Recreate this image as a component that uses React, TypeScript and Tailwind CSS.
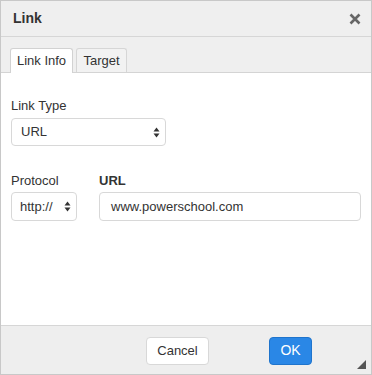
import React from "react";

function Arrows() {
  return (
    <svg width="7" height="11" viewBox="0 0 7 11" className="shrink-0">
      <path d="M3.5 0.5 L6.5 4.5 L0.5 4.5 Z" fill="#333" />
      <path d="M3.5 10.5 L6.5 6.5 L0.5 6.5 Z" fill="#333" />
    </svg>
  );
}

export default function App() {
  return (
    <div
      className="w-[372px] h-[375px] flex flex-col border border-[#c8c8c8] bg-white text-[#333]"
      style={{ fontFamily: '"Liberation Sans", Arial, sans-serif' }}
    >
      <div className="h-[36px] shrink-0 flex items-center justify-between bg-[#efefef] border-b border-[#d6d6d6] pl-[12px] pr-[10px]">
        <span className="text-[14px] font-bold text-[#333]">Link</span>
        <svg width="12" height="12" viewBox="0 0 12 12">
          <path d="M1.5 1.5 L10.5 10.5 M10.5 1.5 L1.5 10.5" stroke="#666" strokeWidth="2.6" strokeLinecap="butt" />
        </svg>
      </div>
      <div className="h-[36px] shrink-0 flex items-end bg-[#efefef] border-b border-[#d4d4d4] pl-[9px] gap-[3px]">
        <div className="h-[25px] w-[63px] -mb-px flex items-center justify-center bg-white border border-b-0 border-[#d2d2d2] rounded-t-[3px] text-[13px] text-[#333]">
          Link Info
        </div>
        <div className="h-[24px] w-[51px] flex items-center justify-center bg-[#f2f2f2] border border-b-0 border-[#d6d6d6] rounded-t-[3px] text-[13px] text-[#333]">
          Target
        </div>
      </div>
      <div className="flex-1 bg-white pl-[10px] pr-[10px] pt-[25px]">
        <div className="text-[13px] leading-[16px]">Link Type</div>
        <div className="mt-[4px] w-[155px] h-[28px] flex items-center justify-between pl-[9px] pr-[5px] border border-[#d8d8d8] rounded-[4px] text-[13px]">
          <span>URL</span>
          <Arrows />
        </div>
        <div className="mt-[27px] flex gap-[22px]">
          <div className="flex flex-col">
            <div className="text-[13px] leading-[16px]">Protocol</div>
            <div className="mt-[3px] w-[66px] h-[29px] flex items-center justify-between pl-[8px] pr-[5px] border border-[#d8d8d8] rounded-[4px] text-[13px]">
              <span>http://</span>
              <Arrows />
            </div>
          </div>
          <div className="flex flex-col flex-1">
            <div className="text-[13px] leading-[16px] font-bold">URL</div>
            <div className="mt-[3px] h-[29px] flex items-center pl-[11px] border border-[#d8d8d8] rounded-[4px] text-[13px]">
              www.powerschool.com
            </div>
          </div>
        </div>
      </div>
      <div className="h-[49px] shrink-0 relative flex items-center justify-end gap-[60px] bg-[#eeeeee] border-t border-[#d6d6d6] pr-[59px] pt-[1px]">
        <div className="w-[63px] h-[28px] flex items-center justify-center bg-white border border-[#d8d8d8] rounded-[4px] text-[13px] text-[#333]">
          Cancel
        </div>
        <div className="w-[43px] h-[28px] flex items-center justify-center bg-[#2a87e6] border border-[#1f74cc] rounded-[4px] text-[14px] text-white">
          OK
        </div>
        <svg width="9" height="9" viewBox="0 0 9 9" className="absolute right-[5px] bottom-[5px]">
          <path d="M9 0 L9 9 L0 9 Z" fill="#555" />
        </svg>
      </div>
    </div>
  );
}
